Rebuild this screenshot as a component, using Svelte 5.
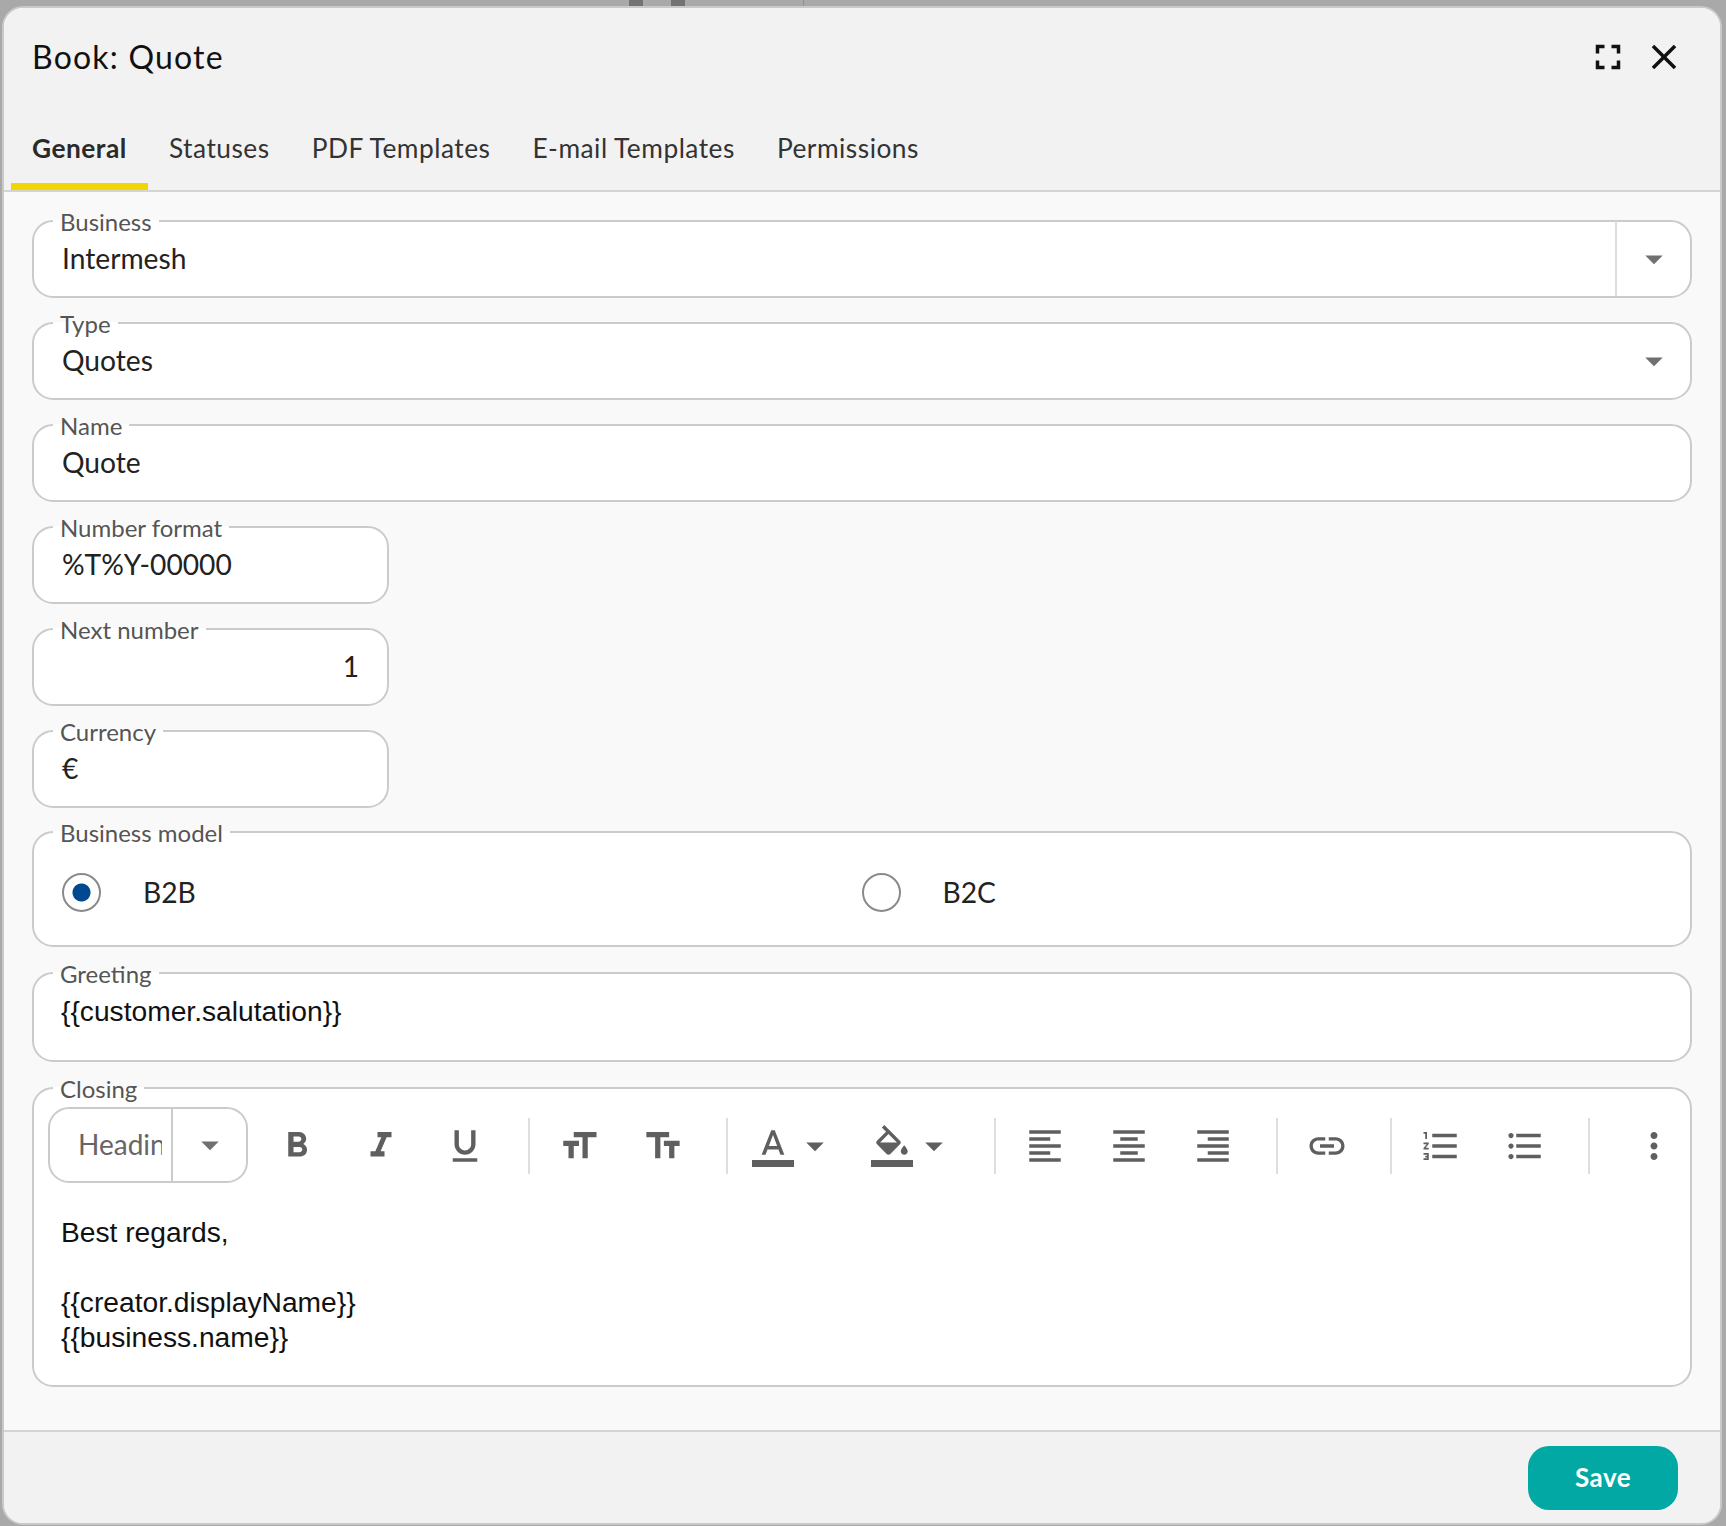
<script>
  const icons = {
    bold: 'M15.6 10.79c.97-.67 1.65-1.77 1.65-2.79 0-2.26-1.75-4-4-4H7v14h7.04c2.09 0 3.71-1.7 3.71-3.79 0-1.52-.86-2.82-2.15-3.42zM10 6.5h3c.83 0 1.5.67 1.5 1.5s-.67 1.5-1.5 1.5h-3v-3zm3.5 9H10v-3h3.5c.83 0 1.5.67 1.5 1.5s-.67 1.5-1.5 1.5z',
    italic: 'M10 4v3h2.21l-3.42 8H6v3h8v-3h-2.21l3.42-8H18V4z',
    underline: 'M12 17c3.31 0 6-2.69 6-6V3h-2.5v8c0 1.93-1.57 3.5-3.5 3.5S8.5 12.93 8.5 11V3H6v8c0 3.31 2.69 6 6 6zm-7 2v2h14v-2H5z',
    size: 'M9 4v3h5v12h3V7h5V4H9zm-6 8h3v7h3v-7h3V9H3v3z',
    fields: 'M2.5 4v3h5v12h3V7h5V4h-13zm19 5h-9v3h3v7h3v-7h3V9z',
    color: 'M11 3L5.5 17h2.25l1.12-3h6.25l1.12 3h2.25L13 3h-2zm-1.38 9L12 5.67 14.38 12H9.62zM0 20h24v4H0z',
    fill: 'M16.56 8.94L7.62 0 6.21 1.41l2.38 2.38-5.15 5.15c-.59.59-.59 1.54 0 2.12l5.5 5.5c.29.29.68.44 1.06.44s.77-.15 1.06-.44l5.5-5.5c.59-.58.59-1.53 0-2.12zM5.21 10L10 5.21 14.79 10H5.21zM19 11.5s-2 2.17-2 3.5c0 1.1.9 2 2 2s2-.9 2-2c0-1.33-2-3.5-2-3.5zM0 20h24v4H0z',
    left: 'M15 15H3v2h12v-2zm0-8H3v2h12V7zM3 13h18v-2H3v2zm0 8h18v-2H3v2zM3 3v2h18V3H3z',
    center: 'M7 15v2h10v-2H7zm-4 6h18v-2H3v2zm0-8h18v-2H3v2zm4-6v2h10V7H7zM3 3v2h18V3H3z',
    right: 'M3 21h18v-2H3v2zm6-4h12v-2H9v2zm-6-4h18v-2H3v2zm6-4h12V7H9v2zM3 3v2h18V3H3z',
    link: 'M3.9 12c0-1.71 1.39-3.1 3.1-3.1h4V7H7c-2.76 0-5 2.24-5 5s2.24 5 5 5h4v-1.9H7c-1.71 0-3.1-1.39-3.1-3.1zM8 13h8v-2H8v2zm9-6h-4v1.9h4c1.71 0 3.1 1.39 3.1 3.1s-1.39 3.1-3.1 3.1h-4V17h4c2.76 0 5-2.24 5-5s-2.24-5-5-5z',
    ol: 'M2 17h2v.5H3v1h1v.5H2v1h3v-4H2v1zm1-9h1V4H2v1h1v3zm-1 3h1.8L2 13.1v.9h3v-1H3.2L5 10.9V10H2v1zm5-6v2h14V5H7zm0 14h14v-2H7v2zm0-6h14v-2H7v2z',
    ul: 'M4 10.5c-.83 0-1.5.67-1.5 1.5s.67 1.5 1.5 1.5 1.5-.67 1.5-1.5-.67-1.5-1.5-1.5zm0-6c-.83 0-1.5.67-1.5 1.5S3.17 7.5 4 7.5 5.5 6.83 5.5 6 4.83 4.5 4 4.5zm0 12c-.83 0-1.5.68-1.5 1.5s.68 1.5 1.5 1.5 1.5-.68 1.5-1.5-.67-1.5-1.5-1.5zM7 19h14v-2H7v2zm0-6h14v-2H7v2zm0-8v2h14V5H7z',
    more: 'M12 8c1.1 0 2-.9 2-2s-.9-2-2-2-2 .9-2 2 .9 2 2 2zm0 2c-1.1 0-2 .9-2 2s.9 2 2 2 2-.9 2-2-.9-2-2-2zm0 6c-1.1 0-2 .9-2 2s.9 2 2 2 2-.9 2-2-.9-2-2-2z',
    drop: 'M7 10l5 5 5-5z',
    fullscreen: 'M7 14H5v5h5v-2H7v-3zm-2-4h2V7h3V5H5v5zm12 7h-3v2h5v-5h-2v3zM14 5v2h3v3h2V5h-5z',
    close: 'M19 6.41L17.59 5 12 10.59 6.41 5 5 6.41 10.59 12 5 17.59 6.41 19 12 13.41 17.59 19 19 17.59 13.41 12z'
  };
  const tabs = ['General', 'Statuses', 'PDF Templates', 'E-mail Templates', 'Permissions'];
</script>

{#snippet icon(name)}
  <svg class="icon" viewBox="0 0 24 24"><path d={icons[name]} /></svg>
{/snippet}

{#snippet btn(name)}
  <span class="tb-btn">{@render icon(name)}</span>
{/snippet}

{#snippet menuBtn(name)}
  <span class="tb-btn menu">{@render icon(name)}{@render icon('drop')}</span>
{/snippet}

<div class="backdrop">
  <span class="bg-bar one"></span>
  <span class="bg-bar two"></span>
  <span class="bg-line"></span>
</div>

<div class="window">
  <header class="head">
    <div class="title-row">
      <h1>Book: Quote</h1>
      <div class="head-tools">
        <span class="head-btn">{@render icon('fullscreen')}</span>
        <span class="head-btn">{@render icon('close')}</span>
      </div>
    </div>
    <nav class="tabs">
      {#each tabs as tab, i}
        <span class="tab" class:active={i === 0}>{tab}</span>
      {/each}
    </nav>
  </header>

  <main class="form">
    <fieldset class="field">
      <legend>Business</legend>
      <div class="control">
        <span class="value">Intermesh</span>
        <span class="picker bordered">{@render icon('drop')}</span>
      </div>
    </fieldset>
    <fieldset class="field">
      <legend>Type</legend>
      <div class="control">
        <span class="value">Quotes</span>
        <span class="picker">{@render icon('drop')}</span>
      </div>
    </fieldset>
    <fieldset class="field">
      <legend>Name</legend>
      <div class="control"><span class="value">Quote</span></div>
    </fieldset>
    <fieldset class="field short">
      <legend>Number format</legend>
      <div class="control"><span class="value">%T%Y-00000</span></div>
    </fieldset>
    <fieldset class="field short">
      <legend>Next number</legend>
      <div class="control"><span class="value num">1</span></div>
    </fieldset>
    <fieldset class="field short tight">
      <legend>Currency</legend>
      <div class="control"><span class="value">€</span></div>
    </fieldset>
    <fieldset class="field roomy">
      <legend>Business model</legend>
      <div class="radios">
        <label class="radio"><span class="circle on"></span>B2B</label>
        <label class="radio"><span class="circle"></span>B2C</label>
      </div>
    </fieldset>
    <fieldset class="field roomy">
      <legend>Greeting</legend>
      <div class="rich greeting">{'{{customer.salutation}}'}</div>
    </fieldset>
    <fieldset class="field last">
      <legend>Closing</legend>
      <div class="toolbar">
        <div class="heading-select">
          <span class="heading-text">Heading</span>
          <span class="heading-arrow">{@render icon('drop')}</span>
        </div>
        {@render btn('bold')}
        {@render btn('italic')}
        {@render btn('underline')}
        <span class="sep"></span>
        {@render btn('size')}
        {@render btn('fields')}
        <span class="sep"></span>
        {@render menuBtn('color')}
        {@render menuBtn('fill')}
        <span class="sep"></span>
        {@render btn('left')}
        {@render btn('center')}
        {@render btn('right')}
        <span class="sep"></span>
        {@render btn('link')}
        <span class="sep"></span>
        {@render btn('ol')}
        {@render btn('ul')}
        <span class="sep"></span>
        <span class="tb-btn more">{@render icon('more')}</span>
      </div>
      <div class="rich closing">
        <div>Best regards,</div>
        <div><br /></div>
        <div>{'{{creator.displayName}}'}</div>
        <div>{'{{business.name}}'}</div>
      </div>
    </fieldset>
  </main>

  <footer class="foot">
    <button class="save">Save</button>
  </footer>
</div>

<style>
  :global(body) {
    margin: 0;
    background: #a9a9a9;
  }

  .backdrop {
    position: absolute;
    top: 0;
    left: 0;
    width: 1726px;
    height: 8px;
    overflow: hidden;
  }

  .bg-bar {
    position: absolute;
    top: 0;
    width: 14px;
    height: 8px;
    background: #737373;
  }

  .bg-bar.one {
    left: 629px;
  }

  .bg-bar.two {
    left: 671px;
  }

  .bg-line {
    position: absolute;
    top: 0;
    left: 803px;
    width: 1px;
    height: 8px;
    background: #8e8e8e;
  }

  .window {
    position: relative;
    box-sizing: border-box;
    width: 1720px;
    height: 1519px;
    margin: 6px 0 0 2px;
    display: flex;
    flex-direction: column;
    background: #f9f9f9;
    border: 2px solid #c9c9c9;
    border-radius: 21px;
    overflow: hidden;
    font-family: Lato, sans-serif;
    color: #111;
  }

  .head {
    height: 184px;
    flex: none;
    box-sizing: border-box;
    display: flex;
    flex-direction: column;
    background: #f2f2f2;
    border-bottom: 2px solid #d4d4d4;
  }

  .title-row {
    display: flex;
    align-items: center;
    justify-content: space-between;
    height: 84px;
    padding: 6px 35px 0 28px;
  }

  h1 {
    margin: 0;
    font-size: 32px;
    font-weight: 400;
    letter-spacing: 1.2px;
  }

  .head-tools {
    display: flex;
    gap: 14px;
    margin-top: 2px;
  }

  .head-btn {
    display: block;
    width: 42px;
    height: 42px;
  }

  .head-btn .icon {
    fill: #111;
  }

  .tabs {
    display: flex;
    height: 90px;
    padding-left: 7px;
    margin-top: auto;
  }

  .tab {
    display: flex;
    align-items: center;
    padding: 12px 21px 0;
    font-size: 26.3px;
    letter-spacing: 0.5px;
    color: #333;
    border-bottom: 7px solid transparent;
  }

  .tab.active {
    font-weight: 700;
    color: #2a2a2a;
    border-bottom-color: #f2d600;
  }

  .form {
    flex: 1;
    padding: 17px 28px 0;
  }

  .field {
    min-width: 0;
    margin: 0 0 13px;
    padding: 0;
    border: 2px solid #cbcbcb;
    border-radius: 21px;
    background: #fff;
  }

  .field.short {
    width: 357px;
    box-sizing: border-box;
  }

  .field.tight {
    margin-bottom: 12px;
  }

  .field.roomy {
    margin-bottom: 14px;
  }

  legend {
    margin-left: 19px;
    padding: 1px 7px 0;
    font-size: 24px;
    line-height: 23px;
    color: #555;
  }

  .control {
    display: flex;
    height: 63px;
  }

  .value {
    flex: 1;
    padding: 0 28px;
    font-size: 28.2px;
    line-height: 50px;
    color: #222;
  }

  .value.num {
    text-align: right;
  }

  .picker {
    flex: none;
    width: 72px;
    margin-top: -12px;
    padding-left: 1px;
    display: flex;
    align-items: center;
    justify-content: center;
    border-left: 2px solid transparent;
  }

  .picker.bordered {
    border-left-color: #dedede;
  }

  .picker .icon {
    fill: #707070;
  }

  .radios {
    display: grid;
    grid-template-columns: 1fr 1fr;
    height: 101px;
    padding: 0 29px 0 28px;
  }

  .radio {
    display: flex;
    align-items: center;
    gap: 42px;
    height: 96px;
    font-size: 28.2px;
    color: #222;
  }

  .circle {
    flex: none;
    box-sizing: border-box;
    width: 39px;
    height: 39px;
    border: 2px solid #8a8a8a;
    border-radius: 50%;
    background: #fff;
  }

  .circle.on {
    background: radial-gradient(circle, #00488f 0 8.5px, #fff 9.5px);
  }

  .rich {
    padding: 0 27px;
    font-family: "Liberation Sans", Arial, sans-serif;
    font-size: 28.2px;
    line-height: 35px;
    color: #111;
  }

  .greeting {
    padding-top: 9px;
    padding-bottom: 31px;
  }

  .closing {
    padding-top: 32px;
    padding-bottom: 30px;
  }

  .toolbar {
    display: flex;
    align-items: center;
    height: 76px;
    margin-top: 7px;
    padding: 0 15px 0 14px;
  }

  .icon {
    display: block;
    width: 42px;
    height: 42px;
    flex: none;
    fill: #5f5f5f;
  }

  .heading-select {
    display: flex;
    box-sizing: border-box;
    width: 200px;
    height: 76px;
    margin-right: 7px;
    border: 2px solid #cbcbcb;
    border-radius: 21px;
  }

  .heading-text {
    flex: none;
    width: 84px;
    margin: 0 9px 0 28px;
    overflow: hidden;
    font-size: 28px;
    line-height: 70px;
    color: #666;
    white-space: nowrap;
  }

  .heading-arrow {
    flex: 1;
    display: flex;
    align-items: center;
    justify-content: center;
    border-left: 2px solid #cbcbcb;
  }

  .heading-arrow .icon {
    fill: #707070;
  }

  .tb-btn {
    flex: none;
    display: flex;
    justify-content: center;
    width: 84px;
    padding-top: 2px;
  }

  .tb-btn.menu {
    width: 119px;
    justify-content: flex-start;
    padding-left: 17px;
    box-sizing: border-box;
  }

  .tb-btn.more {
    width: 42px;
    margin-left: auto;
  }

  .sep {
    flex: none;
    width: 2px;
    height: 56px;
    margin: 2px 7px 0 21px;
    background: #dedede;
  }

  .foot {
    flex: none;
    height: 93px;
    box-sizing: border-box;
    display: flex;
    justify-content: flex-end;
    align-items: flex-start;
    padding: 14px 42px 0 0;
    background: #f2f2f2;
    border-top: 2px solid #d4d4d4;
  }

  .save {
    width: 150px;
    height: 64px;
    padding: 0 0 2px;
    border: 0;
    border-radius: 21px;
    background: #02a8a3;
    color: #fff;
    font-family: Lato, sans-serif;
    font-size: 26px;
    font-weight: 700;
    letter-spacing: 0.5px;
  }
</style>
